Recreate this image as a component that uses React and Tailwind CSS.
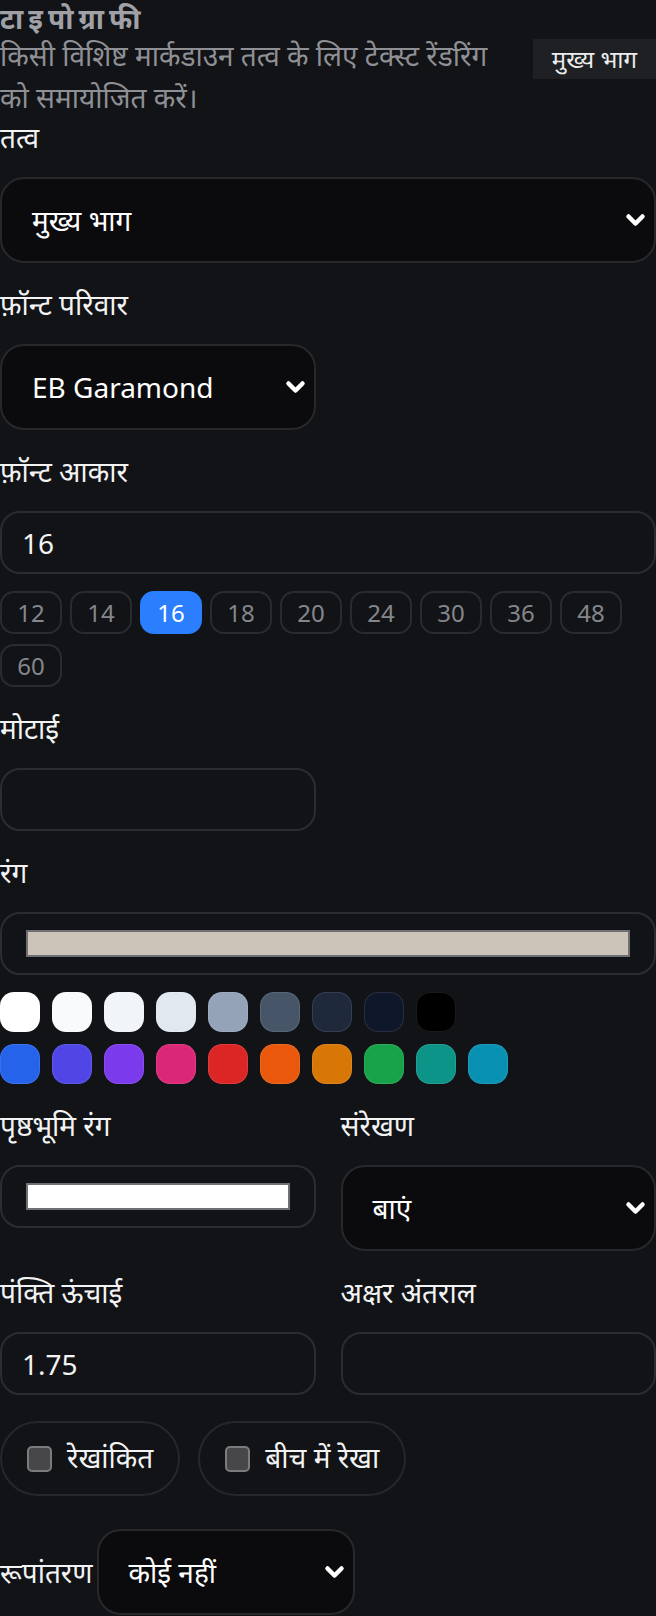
import React from 'react'

const SIZES = [12, 14, 16, 18, 20, 24, 30, 36, 48, 60]
const NEUTRALS = ['#ffffff', '#f8fafc', '#f1f5f9', '#e2e8f0', '#94a3b8', '#475569', '#1e293b', '#0f172a', '#000000']
const BRIGHTS = ['#2563eb', '#4f46e5', '#7c3aed', '#db2777', '#dc2626', '#ea580c', '#d97706', '#16a34a', '#0d9488', '#0891b2']

function Chevron() {
  return (
    <svg width="21" height="15" viewBox="0 0 21 15" className="shrink-0">
      <path d="M3.5 3.5 L10.5 10.5 L17.5 3.5" fill="none" stroke="#ffffff" strokeWidth="4.5" strokeLinecap="round" strokeLinejoin="round" />
    </svg>
  )
}

function Label({ children }) {
  return <div className="text-[28px] leading-[36px] text-[#f3f3f4] mb-[22px]">{children}</div>
}

function Select({ value, className = '' }) {
  return (
    <div className={`h-[86px] rounded-[24px] border-2 border-[#27282c] bg-[#0b0b0d] flex items-center justify-between pl-[30px] pr-[8px] ${className}`}>
      <span className="text-[28px] text-white">{value}</span>
      <Chevron />
    </div>
  )
}

function Input({ value }) {
  return (
    <div className="h-[63px] rounded-[20px] border-2 border-[#2b2c30] flex items-center px-[20px] text-[28px] text-[#f3f3f4]">
      {value}
    </div>
  )
}

function ColorInput({ color }) {
  return (
    <div className="h-[63px] rounded-[20px] border-2 border-[#2b2c30] flex items-center px-[24px]">
      <div className="h-[27px] flex-1 border-2 border-[#6f7073]" style={{ background: color }} />
    </div>
  )
}

function Check({ label }) {
  return (
    <div className="h-[75px] rounded-full border-2 border-[#26272b] flex items-center gap-[15px] px-[25px]">
      <span className="w-[25px] h-[26px] rounded-[5px] border-2 border-[#7c7c7e] bg-[#474749]" />
      <span className="text-[28px] text-[#f3f3f4] -mt-[4px]">{label}</span>
    </div>
  )
}

export default function App() {
  return (
    <div className="w-[656px] h-[1616px] overflow-hidden bg-[#121316] text-white" style={{ fontFamily: '"Noto Sans", sans-serif' }}>
      <div className="flex items-center gap-[12px]">
        <div className="flex-1 min-w-0">
          <div className="text-[28px] leading-[36px] font-bold tracking-[0.18em] text-[#a0a1a6]">टाइपोग्राफी</div>
          <p className="-mt-[2px] text-[28px] leading-[42px] text-[#8f9095]">किसी विशिष्ट मार्कडाउन तत्व के लिए टेक्स्ट रेंडरिंग को समायोजित करें।</p>
        </div>
        <span className="h-[40px] px-[19px] flex items-center bg-[#1f2023] text-[24px] text-[#ececed]">मुख्य भाग</span>
      </div>

      <div className="mt-[1px]">
        <Label>तत्व</Label>
        <Select value="मुख्य भाग" />
      </div>

      <div className="mt-[23px]">
        <Label>फ़ॉन्ट परिवार</Label>
        <div className="grid grid-cols-2 gap-x-[25px]">
          <Select value="EB Garamond" />
        </div>
      </div>

      <div className="mt-[23px]">
        <Label>फ़ॉन्ट आकार</Label>
        <Input value="16" />
        <div className="mt-[17px] flex flex-wrap gap-x-2 gap-y-[10px]">
          {SIZES.map(s => (
            <button
              key={s}
              className={s === 16
                ? 'w-[62px] h-[43px] rounded-[14px] bg-[#2b7fff] text-white text-[24px] leading-none'
                : 'w-[62px] h-[43px] rounded-[14px] border-2 border-[#2a2b2f] text-[#85868b] text-[24px] leading-none'}
            >
              {s}
            </button>
          ))}
        </div>
      </div>

      <div className="mt-[23px]">
        <Label>मोटाई</Label>
        <div className="grid grid-cols-2 gap-x-[25px]">
          <Input value="" />
        </div>
      </div>

      <div className="mt-[23px]">
        <Label>रंग</Label>
        <ColorInput color="#cbc4b7" />
        <div className="mt-[17px] flex gap-3">
          {NEUTRALS.map(c => (
            <span key={c} className="w-10 h-10 rounded-[14px] border border-white/10" style={{ background: c }} />
          ))}
        </div>
        <div className="mt-3 flex gap-3">
          {BRIGHTS.map(c => (
            <span key={c} className="w-10 h-10 rounded-[14px] border border-white/10" style={{ background: c }} />
          ))}
        </div>
      </div>

      <div className="mt-[23px] grid grid-cols-2 gap-x-[25px]">
        <div>
          <Label>पृष्ठभूमि रंग</Label>
          <ColorInput color="#ffffff" />
        </div>
        <div>
          <Label>संरेखण</Label>
          <Select value="बाएं" />
        </div>
      </div>

      <div className="mt-[23px] grid grid-cols-2 gap-x-[25px]">
        <div>
          <Label>पंक्ति ऊंचाई</Label>
          <Input value="1.75" />
        </div>
        <div>
          <Label>अक्षर अंतराल</Label>
          <Input value="" />
        </div>
      </div>

      <div className="mt-[26px] flex gap-[18px]">
        <Check label="रेखांकित" />
        <Check label="बीच में रेखा" />
      </div>

      <div className="mt-[33px] flex items-center gap-1">
        <span className="text-[28px] text-[#f3f3f4]">रूपांतरण</span>
        <Select value="कोई नहीं" className="w-[258px]" />
      </div>
    </div>
  )
}
